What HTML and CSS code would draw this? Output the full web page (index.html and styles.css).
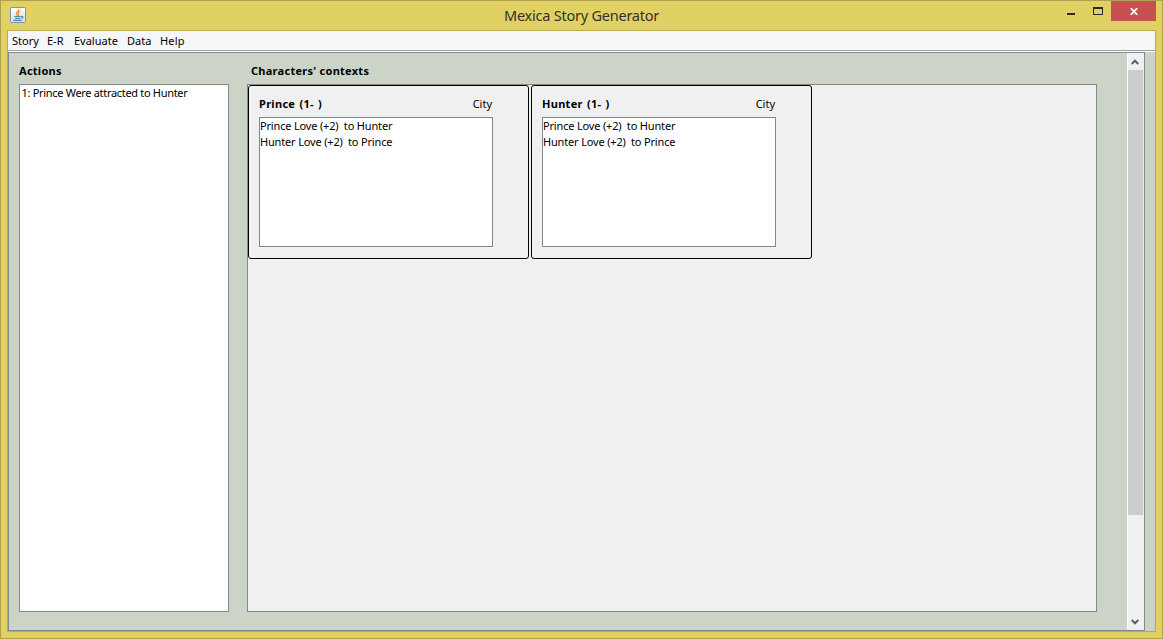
FILE: index.html
```html
<!DOCTYPE html>
<html lang="en">
<head>
<meta charset="utf-8">
<title>Mexica Story Generator</title>
<link rel="stylesheet" href="styles.css">
</head>
<body>
<div class="window">
  <header class="titlebar">
    <svg class="app-icon" width="16" height="16" viewBox="0 0 16 16">
      <defs><linearGradient id="tile" x1="0" y1="0" x2="0" y2="1"><stop offset="0" stop-color="#fff"/><stop offset="1" stop-color="#d3dde8"/></linearGradient></defs>
      <rect x=".5" y=".5" width="15" height="15" rx="1" fill="url(#tile)" stroke="#7d93a8"/>
      <path d="M9 2.2C9.3 4 6 5 6.300 6.800C6.500 7.800 7.500 8 7.800 9M10.400 4.300C8.500 5 7.800 6 8.600 7C9.100 7.700 8.800 8.300 8.300 8.700" fill="none" stroke="#ee8431" stroke-width="1.200"/>
      <path d="M4.300 9.500H10.800M5 11.400H10.300M3.300 13.400H11.700M11 9.500C13.800 8.900 13.300 11.300 11.300 11.600" fill="none" stroke="#5585a5" stroke-width="1.100"/>
    </svg>
    <h1 class="title">Mexica Story Generator</h1>
    <div class="controls">
      <svg class="minmax" width="46" height="20" viewBox="0 0 46 20" shape-rendering="crispEdges">
        <path d="M2 12h8v2H2zM28 6h10v8H28zM29 8v5h8V8z" fill="#2a2a28" fill-rule="evenodd"/>
      </svg>
      <div class="close"><svg width="8" height="7" viewBox="0 0 8 7"><path d="M.8.2 7.200 6.800M7.200.2.8 6.800" stroke="#fff" stroke-width="1.800"/></svg></div>
    </div>
  </header>
  <div class="frame">
    <nav class="menubar">
      <span class="story">Story</span><span class="er">E-R</span><span class="evaluate">Evaluate</span><span class="data">Data</span><span class="help">Help</span>
    </nav>
    <div class="scrollpane">
      <main class="content">
        <section class="actions">
          <h2 class="heading">Actions</h2>
          <div class="list action-list"><span class="action">1: Prince Were attracted to Hunter</span></div>
        </section>
        <section class="contexts">
          <h2 class="heading heading-contexts">Characters' contexts</h2>
          <div class="cards">
            <article class="card">
              <div class="card-head"><b class="name">Prince (1- )</b><span class="place">City</span></div>
              <div class="list links"><span>Prince Love (+2)&nbsp; to Hunter</span><span>Hunter Love (+2)&nbsp; to Prince</span></div>
            </article>
            <article class="card">
              <div class="card-head"><b class="name">Hunter (1- )</b><span class="place">City</span></div>
              <div class="list links"><span>Prince Love (+2)&nbsp; to Hunter</span><span>Hunter Love (+2)&nbsp; to Prince</span></div>
            </article>
          </div>
        </section>
      </main>
      <div class="scrollbar">
        <div class="arrow"><svg width="8" height="6" viewBox="0 0 8 6"><path d="M.7 5 4 1.700 7.300 5" fill="none" stroke="#606060" stroke-width="2"/></svg></div>
        <div class="thumb"></div>
        <div class="arrow arrow-down"><svg width="8" height="6" viewBox="0 0 8 6"><path d="M.7 1 4 4.300 7.300 1" fill="none" stroke="#606060" stroke-width="2"/></svg></div>
      </div>
    </div>
  </div>
</div>
</body>
</html>
```
FILE: styles.css
```css
* { box-sizing: border-box; }
body { margin: 0; overflow: hidden; font: 11px/16px "Noto Sans", sans-serif; color: #000; }
h1, h2 { margin: 0; font-weight: normal; }
svg { display: block; }
.window { width: 1163px; height: 639px; display: flex; flex-direction: column; background: #e1d165; border: 1px solid #ada04e; padding: 0 6px 6px; }
.titlebar { height: 29px; flex: none; display: flex; align-items: flex-start; }
.app-icon { margin: 6px 0 0 3px; }
.title { flex: 1; margin: 4px 0 0 478px; font-size: 14.5px; line-height: 20px; letter-spacing: -.23px; color: #34322a; white-space: nowrap; }
.controls { display: flex; }
.close { width: 45px; height: 20px; background: #c75050; display: flex; justify-content: center; padding-top: 7px; }
.frame { flex: 1; border: 1px solid #bbab4c; background: #ccd4c8; display: flex; flex-direction: column; }
.menubar { height: 21px; background: #f5f6f8; border-bottom: 1px solid #fff; box-shadow: inset 0 -1px #a0a0a0; display: flex; padding: 2px 0 0 4px; white-space: nowrap; }
.story { width: 35px; }
.er { width: 27px; }
.evaluate { width: 53px; }
.data { width: 33px; }
.help { width: 26px; letter-spacing: .2px; }
.scrollpane { width: 1137px; height: 579px; border: 1px solid #828790; display: flex; }
.content { width: 1118px; display: flex; padding: 10px 0 0 10px; }
.actions { width: 228px; }
.heading { height: 21px; font-size: 11px; line-height: 16px; font-weight: bold; letter-spacing: .27px; white-space: nowrap; }
.heading-contexts { padding-left: 4px; }
.list { background: #fff; border: 1px solid #828790; display: flex; flex-direction: column; white-space: nowrap; }
.action-list { width: 210px; height: 528px; padding-left: 1.5px; letter-spacing: -.31px; }
.cards { width: 850px; height: 528px; background: #f0f0f0; border: 1px solid #828790; display: flex; align-items: flex-start; gap: 2px; }
.card { width: 281px; height: 174px; border: 1px solid #000; border-radius: 3px; padding: 10px; background: #f0f0f0; }
.card-head { width: 234px; height: 21px; display: flex; justify-content: space-between; padding-right: 1px; }
.name { letter-spacing: .3px; word-spacing: 1px; }
.links { width: 234px; height: 130px; letter-spacing: -.17px; }
.scrollbar { width: 17px; background: #f0f0f0; border-left: 1px solid #fff; display: flex; flex-direction: column; }
.arrow { height: 17px; flex: none; padding: 6px 0 0 3px; }
.thumb { width: 15px; height: 445px; background: #cdcdcd; }
.arrow-down { margin-top: auto; }
```
